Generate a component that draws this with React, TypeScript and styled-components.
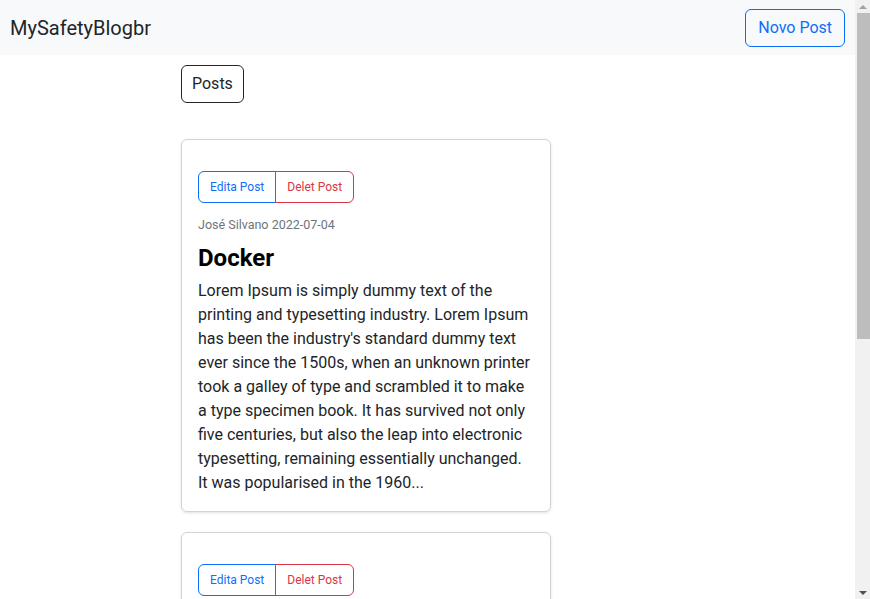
import styled, { createGlobalStyle } from 'styled-components';

const GlobalStyle = createGlobalStyle`
  html, body {
    margin: 0;
    padding: 0;
    background: #fff;
    font-family: Roboto, "Liberation Sans", sans-serif;
    color: #212529;
  }
  * { box-sizing: border-box; }
`;

const Page = styled.div`
  margin-right: 15px;
`;

const Navbar = styled.nav`
  height: 55px;
  background: #f8f9fa;
  display: flex;
  align-items: center;
  justify-content: space-between;
  padding: 0 10px;
`;

const Brand = styled.a`
  font-size: 20px;
  color: #212529;
  text-decoration: none;
`;

const OutlineButton = styled.button<{ tone: 'primary' | 'dark' | 'danger'; small?: boolean }>`
  font-family: inherit;
  background: transparent;
  cursor: pointer;
  border: 1px solid
    ${p => (p.tone === 'primary' ? '#0d6efd' : p.tone === 'danger' ? '#dc3545' : '#212529')};
  color: ${p => (p.tone === 'primary' ? '#0d6efd' : p.tone === 'danger' ? '#dc3545' : '#212529')};
  font-size: ${p => (p.small ? '12px' : '16px')};
  height: ${p => (p.small ? '32px' : '38px')};
  padding: ${p => (p.small ? '0 11px' : '0 12px')};
  border-radius: 6px;
  line-height: 1;
`;

const PostsButton = styled(OutlineButton)`
  padding: 0 10px;
`;

const Main = styled.main`
  padding: 10px 0 150px 181px;
`;

const Header = styled.div`
  margin-bottom: 36px;
`;

const Column = styled.div`
  width: 370px;
  display: flex;
  flex-direction: column;
  gap: 20px;
`;

const Card = styled.article`
  border: 1px solid #d3d3d3;
  border-radius: 6px;
  box-shadow: 0 1px 3px rgba(0, 0, 0, 0.12);
  padding: 31px 16px 16px;
`;

const ButtonGroup = styled.div`
  display: inline-flex;

  & > button:first-child {
    border-top-right-radius: 0;
    border-bottom-right-radius: 0;
  }
  & > button:last-child {
    border-top-left-radius: 0;
    border-bottom-left-radius: 0;
    margin-left: -1px;
  }
`;

const Meta = styled.div`
  margin-top: 12px;
  font-size: 12.5px;
  line-height: 20px;
  color: #6c757d;
`;

const Title = styled.h4`
  margin: 9px 0 6px;
  font-size: 24px;
  font-weight: 700;
  line-height: 29px;
  color: #000;
`;

const Body = styled.p`
  margin: 0;
  font-size: 16px;
  line-height: 24px;
  color: #212529;
`;

/* fake classic scrollbar, drawn over the right edge of the window */
const Scrollbar = styled.div`
  position: fixed;
  top: 0;
  right: 0;
  width: 15px;
  height: 100vh;
  background: #f1f1f1;
  display: flex;
  flex-direction: column;
  align-items: center;
`;

const Arrow = styled.div<{ down?: boolean }>`
  width: 15px;
  height: 13px;
  display: flex;
  align-items: center;
  justify-content: center;

  &::before {
    content: '';
    border-left: 4px solid transparent;
    border-right: 4px solid transparent;
    ${p =>
      p.down
        ? 'border-top: 4px solid #505050;'
        : 'border-bottom: 4px solid #a3a3a3;'}
  }
`;

const Track = styled.div`
  flex: 1;
  width: 100%;
  padding-left: 2px;
`;

const Thumb = styled.div`
  height: 326px;
  background: #bdbdbd;
`;

const text =
  "Lorem Ipsum is simply dummy text of the printing and typesetting industry. Lorem Ipsum has been the industry's standard dummy text ever since the 1500s, when an unknown printer took a galley of type and scrambled it to make a type specimen book. It has survived not only five centuries, but also the leap into electronic typesetting, remaining essentially unchanged. It was popularised in the 1960...";

const posts = [
  { id: 1, author: 'José Silvano', date: '2022-07-04', title: 'Docker', body: text },
  { id: 2, author: 'José Silvano', date: '2022-07-04', title: 'Kubernetes', body: text },
];

export default function App() {
  return (
    <>
      <GlobalStyle />
      <Page>
        <Navbar>
          <Brand href="#">MySafetyBlogbr</Brand>
          <OutlineButton tone="primary">Novo Post</OutlineButton>
        </Navbar>
        <Main>
          <Header>
            <PostsButton tone="dark">Posts</PostsButton>
          </Header>
          <Column>
            {posts.map(p => (
              <Card key={p.id}>
                <ButtonGroup>
                  <OutlineButton tone="primary" small>Edita Post</OutlineButton>
                  <OutlineButton tone="danger" small>Delet Post</OutlineButton>
                </ButtonGroup>
                <Meta>
                  {p.author} {p.date}
                </Meta>
                <Title>{p.title}</Title>
                <Body>{p.body}</Body>
              </Card>
            ))}
          </Column>
        </Main>
      </Page>
      <Scrollbar>
        <Arrow />
        <Track>
          <Thumb />
        </Track>
        <Arrow down />
      </Scrollbar>
    </>
  );
}
